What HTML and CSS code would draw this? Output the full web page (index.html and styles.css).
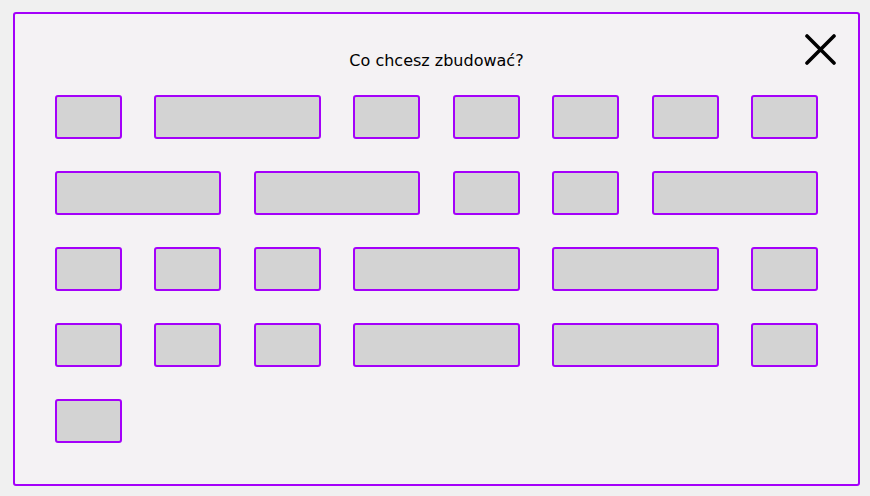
FILE: index.html
```html
<!DOCTYPE html>
<html lang="pl">
<head>
<meta charset="utf-8">
<title>Co chcesz zbudować?</title>
<link rel="stylesheet" href="styles.css">
</head>
<body>
<div class="dialog">
  <button class="close" aria-label="Zamknij">
    <svg width="31" height="31" viewBox="0 0 31 31"><path d="M2 2 L29 29 M29 2 L2 29" stroke="#000" stroke-width="3.6" stroke-linecap="round" fill="none"/></svg>
  </button>
  <h1 class="title">Co chcesz zbudować?</h1>
  <div class="grid">
    <div class="item"></div><div class="item wide"></div><div class="item"></div><div class="item"></div><div class="item"></div><div class="item"></div><div class="item"></div>
    <div class="item wide"></div><div class="item wide"></div><div class="item"></div><div class="item"></div><div class="item wide"></div>
    <div class="item"></div><div class="item"></div><div class="item"></div><div class="item wide"></div><div class="item wide"></div><div class="item"></div>
    <div class="item"></div><div class="item"></div><div class="item"></div><div class="item wide"></div><div class="item wide"></div><div class="item"></div>
    <div class="item"></div>
  </div>
</div>
</body>
</html>
```
FILE: styles.css
```css
html, body {
  margin: 0;
  padding: 0;
  background: #f0f0f0;
}
body {
  font-family: "DejaVu Sans", Verdana, sans-serif;
}
.dialog {
  position: relative;
  box-sizing: border-box;
  width: 847px;
  height: 474px;
  margin: 12px 0 0 13px;
  padding: 0 40px;
  border: 2px solid #a400fa;
  border-radius: 3px;
  background: #f4f2f4;
}
.close {
  position: absolute;
  top: 20px;
  right: 22px;
  padding: 0;
  border: 0;
  background: none;
  line-height: 0;
}
.title {
  margin: 0;
  padding-top: 37px;
  height: 44px;
  font-size: 16px;
  font-weight: normal;
  line-height: 19px;
  text-align: center;
  color: #000;
}
.grid {
  display: grid;
  grid-template-columns: repeat(8, 67px);
  grid-auto-rows: 43.5px;
  column-gap: 32.43px;
  row-gap: 32.5px;
}
.item {
  box-sizing: border-box;
  border: 2px solid #a400fa;
  border-radius: 3px;
  background: #d3d3d3;
}
.wide {
  grid-column: span 2;
}
```
